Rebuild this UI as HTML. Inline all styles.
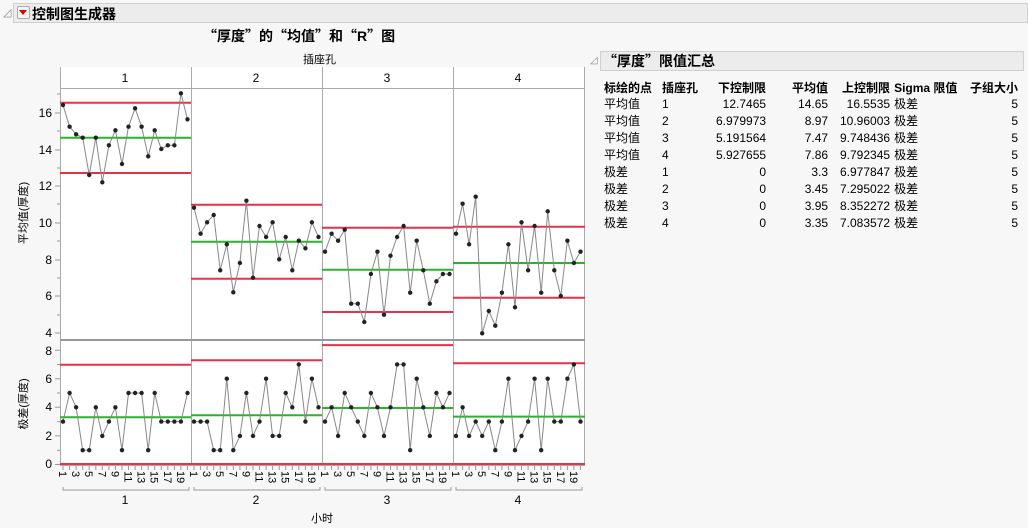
<!DOCTYPE html>
<html><head><meta charset="utf-8"><style>
body{margin:0;width:1028px;height:528px;background:#f7f7f7;font-family:"Liberation Sans","Noto Sans CJK SC",sans-serif;overflow:hidden;position:relative}
.hdr{position:absolute;left:13px;top:3px;width:1015px;height:20px;background:#ececec;border:1px solid #cfcfcf;box-sizing:border-box}
.t{position:absolute;white-space:nowrap;color:#000}
.cj{font-family:"Noto Sans CJK SC",sans-serif}
table{position:absolute;left:602px;top:79px;border-collapse:collapse;font-size:12px}
td{padding:0 2px;height:17px;line-height:17px;white-space:nowrap}
th{padding:0 2px;height:17px;font-weight:bold;white-space:nowrap}
</style></head><body>
<div class="hdr"></div>
<div class="t" style="left:3px;top:6px;font-size:11px;color:#888">◿</div>
<div style="position:absolute;left:17px;top:6px;width:11px;height:11px;border:1px solid #aaa;border-radius:2px;background:#f4f4f4"></div>
<div style="position:absolute;left:19px;top:10px;width:0;height:0;border-left:4px solid transparent;border-right:4px solid transparent;border-top:5px solid #d00"></div>
<div class="t" style="left:32px;top:4px;font-size:14px;font-weight:bold">控制图生成器</div>
<div class="t cj" style="left:203px;top:26px;font-size:14px;font-weight:bold;line-height:20px">“厚度”的“均值”和“<span style="font-family:'Liberation Sans'">R</span>”图</div>
<div class="t" style="left:303px;top:51px;font-size:11px">插座孔</div>

<div style="position:absolute;left:600px;top:51px;width:424px;height:20px;background:#ececec;border:1px solid #cfcfcf;box-sizing:border-box"></div>
<div class="t" style="left:590px;top:55px;font-size:10px;color:#888">◿</div>
<div class="t cj" style="left:603px;top:51px;font-size:14px;font-weight:bold;line-height:20px">“厚度”限值汇总</div>
<table>
<tr><th style="text-align:left;width:54px">标绘的点</th><th style="text-align:left;width:50px">插座孔</th><th style="text-align:right;width:50px">下控制限</th><th style="text-align:right;width:58px">平均值</th><th style="text-align:right;width:58px">上控制限</th><th style="text-align:left;width:68px">Sigma 限值</th><th style="text-align:right;width:52px">子组大小</th></tr>
<tr><td>平均值</td><td>1</td><td align="right">12.7465</td><td align="right">14.65</td><td align="right">16.5535</td><td>极差</td><td align="right">5</td></tr>
<tr><td>平均值</td><td>2</td><td align="right">6.979973</td><td align="right">8.97</td><td align="right">10.96003</td><td>极差</td><td align="right">5</td></tr>
<tr><td>平均值</td><td>3</td><td align="right">5.191564</td><td align="right">7.47</td><td align="right">9.748436</td><td>极差</td><td align="right">5</td></tr>
<tr><td>平均值</td><td>4</td><td align="right">5.927655</td><td align="right">7.86</td><td align="right">9.792345</td><td>极差</td><td align="right">5</td></tr>
<tr><td>极差</td><td>1</td><td align="right">0</td><td align="right">3.3</td><td align="right">6.977847</td><td>极差</td><td align="right">5</td></tr>
<tr><td>极差</td><td>2</td><td align="right">0</td><td align="right">3.45</td><td align="right">7.295022</td><td>极差</td><td align="right">5</td></tr>
<tr><td>极差</td><td>3</td><td align="right">0</td><td align="right">3.95</td><td align="right">8.352272</td><td>极差</td><td align="right">5</td></tr>
<tr><td>极差</td><td>4</td><td align="right">0</td><td align="right">3.35</td><td align="right">7.083572</td><td>极差</td><td align="right">5</td></tr>
</table>

<svg width="600" height="528" style="position:absolute;left:0;top:0" font-family="Liberation Sans, Noto Sans CJK SC, sans-serif">
<defs><marker id="d" markerWidth="6" markerHeight="6" refX="3" refY="3" markerUnits="userSpaceOnUse"><circle cx="3" cy="3" r="2.2" fill="#222"/></marker></defs>
<rect x="60" y="67" width="525" height="21" fill="#fff"/>
<rect x="60" y="88" width="525" height="378" fill="#fff"/>
<g font-size="12" text-anchor="middle"><text x="125" y="82">1</text><text x="256" y="82">2</text><text x="387" y="82">3</text><text x="518" y="82">4</text></g>
<g stroke="#aaa" stroke-width="1" fill="none">
<rect x="60.5" y="88.5" width="524" height="377"/>
<line x1="191.5" y1="67" x2="191.5" y2="466"/><line x1="322.5" y1="67" x2="322.5" y2="466"/><line x1="453.5" y1="67" x2="453.5" y2="466"/>
<line x1="60.5" y1="67" x2="60.5" y2="88"/><line x1="584.5" y1="67" x2="584.5" y2="88"/>
</g>
<line x1="60" y1="340" x2="585" y2="340" stroke="#999" stroke-width="2"/>
<g stroke="#999"><path d="M55 113H60M55 150H60M55 186H60M55 223H60M55 260H60M55 296H60M55 333H60M57 94H60M57 131H60M57 168H60M57 204H60M57 241H60M57 278H60M57 315H60M55 350.3H60M55 378.7H60M55 407.3H60M55 435.9H60M55 464.5H60M57 364.5H60M57 393H60M57 421.6H60M57 450.2H60"/></g>
<g font-size="12" text-anchor="end"><text x="52" y="117">16</text><text x="52" y="154">14</text><text x="52" y="190">12</text><text x="52" y="227">10</text><text x="52" y="264">8</text><text x="52" y="300">6</text><text x="52" y="337">4</text>
<text x="52" y="355">8</text><text x="52" y="383">6</text><text x="52" y="411">4</text><text x="52" y="440">2</text><text x="52" y="468">0</text></g>
<text font-size="11" transform="translate(27,213) rotate(-90)" text-anchor="middle">平均值(厚度)</text>
<text font-size="11" transform="translate(27,404) rotate(-90)" text-anchor="middle">极差(厚度)</text>
<g stroke-width="2">
<path stroke="#e8304a" d="M60 102.7H191M60 173H191M191 204.7H322M191 278.7H322M322 227.7H453M322 312H453M453 226.7H585M453 297.7H585M60 364.7H191M191 360.2H322M322 345.1H453M453 363.2H585M60 464H585"/>
<path stroke="#2bb32b" d="M60 137.7H191M191 241.7H322M322 269.7H453M453 263H585M60 417.3H191M191 415.2H322M322 408H453M453 416.6H585"/>
</g>
<g fill="none" stroke="#888" stroke-width="1" marker-start="url(#d)" marker-mid="url(#d)" marker-end="url(#d)">
<polyline points="63,105 69.6,126.7 76.1,134.3 82.7,137.7 89.2,175 95.8,137.7 102.3,182.3 108.9,145.3 115.4,130.3 122,164 128.5,126.7 135.1,108.3 141.6,126.7 148.2,156.3 154.7,130.3 161.3,149 167.8,145.3 174.4,145.3 180.9,93.3 187.5,119.3"/>
<polyline points="194,207.7 200.6,233.7 207.1,222.3 213.7,215 220.2,270.3 226.8,244.3 233.3,292.3 239.9,263 246.4,200.7 253,277.7 259.5,226 266.1,237 272.6,222.3 279.2,259.3 285.7,237 292.3,270.3 298.8,240.7 305.4,248.3 311.9,222.3 318.5,237"/>
<polyline points="325,251.7 331.6,233.7 338.1,240.7 344.7,229.7 351.2,303.7 357.8,303.7 364.3,322 370.9,274 377.4,251.7 384,314.7 390.5,255.7 397.1,237 403.6,226 410.2,292.7 416.7,240.7 423.3,270.3 429.8,303.7 436.4,281.3 442.9,274 449.5,274"/>
<polyline points="456,233.7 462.6,203.7 469.1,244.3 475.7,196.7 482.2,333.3 488.8,311 495.3,325.7 501.9,292.7 508.4,244.3 515,307.3 521.5,222.3 528.1,270.3 534.6,226 541.2,292.7 547.7,211.3 554.3,270.3 560.8,296 567.4,240.7 573.9,263 580.5,251.7"/>
<polyline points="63,421.6 69.6,393 76.1,407.3 82.7,450.2 89.2,450.2 95.8,407.3 102.3,435.9 108.9,421.6 115.4,407.3 122,450.2 128.5,393 135.1,393 141.6,393 148.2,450.2 154.7,393 161.3,421.6 167.8,421.6 174.4,421.6 180.9,421.6 187.5,393"/>
<polyline points="194,421.6 200.6,421.6 207.1,421.6 213.7,450.2 220.2,450.2 226.8,378.7 233.3,450.2 239.9,435.9 246.4,393 253,435.9 259.5,421.6 266.1,378.7 272.6,435.9 279.2,435.9 285.7,393 292.3,407.3 298.8,364.4 305.4,421.6 311.9,378.7 318.5,407.3"/>
<polyline points="325,421.6 331.6,407.3 338.1,435.9 344.7,393 351.2,407.3 357.8,421.6 364.3,435.9 370.9,393 377.4,407.3 384,435.9 390.5,407.3 397.1,364.4 403.6,364.4 410.2,450.2 416.7,378.7 423.3,407.3 429.8,435.9 436.4,393 442.9,407.3 449.5,393"/>
<polyline points="456,435.9 462.6,407.3 469.1,435.9 475.7,421.6 482.2,435.9 488.8,421.6 495.3,450.2 501.9,421.6 508.4,378.7 515,450.2 521.5,435.9 528.1,421.6 534.6,378.7 541.2,450.2 547.7,378.7 554.3,421.6 560.8,421.6 567.4,378.7 573.9,364.4 580.5,421.6"/>
</g>
<g stroke="#999" stroke-width="1">
<path id="tk" d="M63 466V470M69.6 466V470M76.1 466V470M82.7 466V470M89.2 466V470M95.8 466V470M102.3 466V470M108.9 466V470M115.4 466V470M122 466V470M128.5 466V470M135.1 466V470M141.6 466V470M148.2 466V470M154.7 466V470M161.3 466V470M167.8 466V470M174.4 466V470M180.9 466V470M187.5 466V470"/>
<use href="#tk" x="131"/><use href="#tk" x="262"/><use href="#tk" x="393"/>
<path fill="none" d="M63 487V490H189V487M194 487V490H320V487M325 487V490H451V487M456 487V490H582V487"/>
</g>
<g id="lb" font-size="11">
<text transform="translate(59,471) rotate(90)">1</text><text transform="translate(72.1,471) rotate(90)">3</text><text transform="translate(85.2,471) rotate(90)">5</text><text transform="translate(98.3,471) rotate(90)">7</text><text transform="translate(111.4,471) rotate(90)">9</text><text transform="translate(124.5,471) rotate(90)">11</text><text transform="translate(137.6,471) rotate(90)">13</text><text transform="translate(150.7,471) rotate(90)">15</text><text transform="translate(163.8,471) rotate(90)">17</text><text transform="translate(176.9,471) rotate(90)">19</text>
</g>
<use href="#lb" x="131"/><use href="#lb" x="262"/><use href="#lb" x="393"/>
<g font-size="12" text-anchor="middle"><text x="125" y="504">1</text><text x="256" y="504">2</text><text x="387" y="504">3</text><text x="518" y="504">4</text></g>
<text x="322" y="522" font-size="11" text-anchor="middle">小时</text>
</svg>
</body></html>
